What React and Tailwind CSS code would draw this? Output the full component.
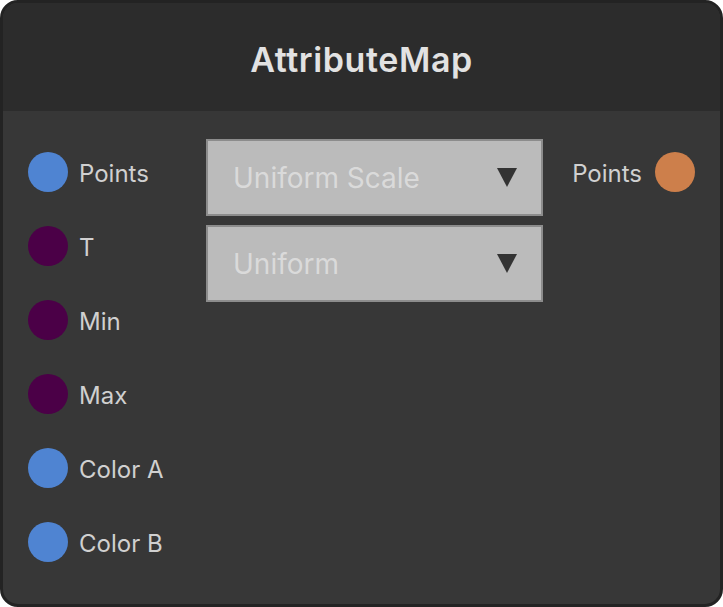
import React from "react";

const INPUTS = [
  { name: "Points", color: "bg-[#4f84d2]" },
  { name: "T", color: "bg-[#4b0047]" },
  { name: "Min", color: "bg-[#4b0047]" },
  { name: "Max", color: "bg-[#4b0047]" },
  { name: "Color A", color: "bg-[#4f84d2]" },
  { name: "Color B", color: "bg-[#4f84d2]" },
];

const OPTIONS = ["Uniform Scale", "Uniform"];

function Caret() {
  return (
    <svg width="20" height="19" viewBox="0 0 20 19">
      <polygon points="0,0 20,0 10,19" fill="#333333" />
    </svg>
  );
}

function Select({ label }) {
  return (
    <div className="flex h-[77px] items-center justify-between border-2 border-[#8c8c8c] bg-[#bbbbbb] pl-[25px] pr-[24px]">
      <span className="text-[28px] leading-none text-[#dadada]">{label}</span>
      <Caret />
    </div>
  );
}

export default function App() {
  return (
    <div
      className="flex h-[607px] w-[723px] flex-col overflow-hidden rounded-[18px] border-[3px] border-[#232323] bg-[#373737]"
      style={{ fontFamily: "Inter, 'Noto Sans', sans-serif" }}
    >
      <header className="flex h-[108px] shrink-0 items-center justify-center bg-[#2c2c2c] pt-[6px]">
        <h1 className="text-[34px] font-semibold leading-none tracking-[0.6px] text-[#e2e2e2]">
          AttributeMap
        </h1>
      </header>
      <main className="flex flex-1 pl-[25px] pr-[25px] pt-[24px]">
        <div className="flex w-[178px] flex-col">
          {INPUTS.map((p) => (
            <div key={p.name} className="flex h-[74px] items-center gap-[11px]">
              <span className={`h-10 w-10 shrink-0 rounded-full ${p.color}`} />
              <span className="pt-[3px] text-[24px] leading-none text-[#d0d0d0]">{p.name}</span>
            </div>
          ))}
        </div>
        <div className="flex w-[337px] flex-col gap-[9px] pt-[4px]">
          {OPTIONS.map((o) => (
            <Select key={o} label={o} />
          ))}
        </div>
        <div className="flex flex-1 justify-end">
          <div className="flex h-[74px] items-center gap-[13px]">
            <span className="pt-[3px] text-[24px] leading-none text-[#d0d0d0]">Points</span>
            <span className="h-10 w-10 shrink-0 rounded-full bg-[#cd7f4b]" />
          </div>
        </div>
      </main>
    </div>
  );
}
